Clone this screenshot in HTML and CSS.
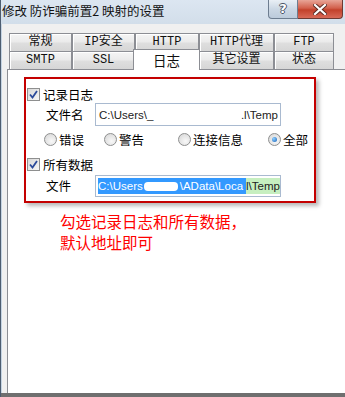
FILE: index.html
```html
<!DOCTYPE html>
<html lang="zh-CN">
<head>
    <meta charset="UTF-8">
    <title>修改 防诈骗前置2 映射的设置</title>
    <link rel="stylesheet" href="styles.css">
</head>
<body>
<div class="window">
    <div class="titlebar">
        <span class="title">修改 防诈骗前置2 映射的设置</span>
        <div class="caption-btns">
            <div class="btn-help">?</div>
            <div class="btn-close">
                <svg width="14" height="11" viewBox="0 0 14 11">
                    <path d="M2 1 L12 10 M12 1 L2 10" stroke="#5a2a22" stroke-width="4" stroke-linecap="square"/>
                    <path d="M2 1 L12 10 M12 1 L2 10" stroke="#ffffff" stroke-width="2.2" stroke-linecap="square"/>
                </svg>
            </div>
        </div>
    </div>

    <div class="client">
        <div class="tabs">
            <div class="tab-row">
                <div class="tab">常规</div>
                <div class="tab">IP安全</div>
                <div class="tab">HTTP</div>
                <div class="tab">HTTP代理</div>
                <div class="tab">FTP</div>
            </div>
            <div class="tab-row">
                <div class="tab">SMTP</div>
                <div class="tab">SSL</div>
                <div class="tab active">日志</div>
                <div class="tab">其它设置</div>
                <div class="tab">状态</div>
            </div>
        </div>

        <div class="panel">
            <div class="redbox">
                <div class="row check-row first">
                    <span class="checkbox">
                        <svg width="11" height="11" viewBox="0 0 11 11"><path d="M2 5.5 L4.5 8.5 L9 2" fill="none" stroke="#2b4a9a" stroke-width="1.8"/></svg>
                    </span>
                    <span>记录日志</span>
                </div>
                <div class="row field-row">
                    <span class="field-label">文件名</span>
                    <div class="input">
                        <span>C:\Users\_</span>
                        <span>.l\Temp</span>
                    </div>
                </div>
                <div class="row radio-row">
                    <label class="radio-item w1"><span class="radio"></span>错误</label>
                    <label class="radio-item w2"><span class="radio"></span>警告</label>
                    <label class="radio-item w3"><span class="radio"></span>连接信息</label>
                    <label class="radio-item"><span class="radio checked"></span>全部</label>
                </div>
                <div class="row check-row second">
                    <span class="checkbox">
                        <svg width="11" height="11" viewBox="0 0 11 11"><path d="M2 5.5 L4.5 8.5 L9 2" fill="none" stroke="#2b4a9a" stroke-width="1.8"/></svg>
                    </span>
                    <span>所有数据</span>
                </div>
                <div class="row field-row last">
                    <span class="field-label">文件</span>
                    <div class="input selected">
                        <span class="sel">C:\Users<span class="blot"></span>\AData\Loca</span><span class="sel-green">l\Temp</span>
                    </div>
                </div>
            </div>
            <p class="note">勾选记录日志和所有数据，<br>默认地址即可</p>
        </div>
    </div>

    <div class="bottombar"></div>
</div>
</body>
</html>
```

FILE: styles.css
```css
html, body {
    margin: 0;
    padding: 0;
}
body {
    width: 345px;
    height: 397px;
    overflow: hidden;
    font-family: "Noto Sans CJK SC", "Liberation Sans", sans-serif;
    font-size: 12px;
    color: #000;
}
.window {
    width: 345px;
    height: 397px;
    display: flex;
    flex-direction: column;
    border-left: 1px solid #4d5d70;
    box-sizing: border-box;
    background: #c4d3e2;
}

/* title bar */
.titlebar {
    height: 24px;
    flex: none;
    display: flex;
    justify-content: space-between;
    background: linear-gradient(#dce6f1, #d2deea);
}
.title {
    padding: 3px 0 0 1px;
    line-height: 16px;
    font-size: 12.5px;
    color: #111;
}
.caption-btns {
    display: flex;
    margin-right: 2px;
    height: 19px;
}
.btn-help {
    width: 28px;
    height: 18px;
    border: 1px solid #6d7d90;
    border-top: none;
    border-radius: 0 0 0 4px;
    background: linear-gradient(#e9eff5, #cbd7e4 50%, #bccbdb);
    color: #fff;
    font-family: "DejaVu Sans", sans-serif;
    font-weight: bold;
    font-size: 13px;
    line-height: 18px;
    text-align: center;
    text-shadow: 1px 0 0 #4a5566, -1px 0 0 #4a5566, 0 1px 0 #4a5566, 0 -1px 0 #4a5566;
}
.btn-close {
    width: 44px;
    height: 18px;
    border: 1px solid #6e3a33;
    border-top: none;
    border-left: none;
    border-radius: 0 0 4px 0;
    background: linear-gradient(#e8a597, #d2604c 45%, #c2412b 55%, #d86a58);
    display: flex;
    align-items: center;
    justify-content: center;
}

/* client area */
.client {
    flex: 1;
    display: flex;
    flex-direction: column;
    background: #f0f0f0;
    margin-left: 1px;
    padding: 9px 8px 0 5px;
    min-height: 0;
}
.tabs {
    margin-left: 2px;
}
.tab-row {
    display: grid;
    grid-template-columns: 63px 63px 64px 75px 60px;
    height: 18px;
}
.tab {
    border: 1px solid #8c8e94;
    border-bottom: none;
    background: linear-gradient(#f5f5f5, #ebebeb 45%, #dedede 55%, #d6d6d6);
    font-family: "Liberation Mono", "Noto Sans CJK SC", monospace;
    font-size: 12px;
    line-height: 17px;
    text-align: center;
    box-shadow: inset 1px 1px 0 #fff;
    color: #111;
}
.tab.active {
    background: #fff;
    box-shadow: none;
    margin: -2px -1px -1px -2px;
    line-height: 20px;
    z-index: 2;
    font-family: "Noto Sans CJK SC", sans-serif;
    font-size: 13.5px;
}

/* tab page */
.panel {
    flex: 1;
    width: 328px;
    background: #fff;
    border: 1px solid #8c8e94;
    border-bottom: none;
    padding: 7px 0 0 16px;
}
.redbox {
    width: 288px;
    height: 122px;
    border: 2px solid #c40000;
    box-shadow: 3px 3px 4px rgba(0, 0, 0, 0.28);
    display: flex;
    flex-direction: column;
}
.row {
    display: flex;
    align-items: center;
}
.check-row {
    height: 13px;
    padding-left: 1px;
    gap: 3px;
    line-height: 13px;
    font-size: 12.5px;
}
.check-row.first {
    margin-top: 9px;
}
.check-row.second {
    margin-top: 12px;
}
.checkbox {
    width: 11px;
    height: 11px;
    border: 1px solid #8e8f8f;
    background: linear-gradient(135deg, #d8d8d8, #f6f6f6);
    display: flex;
}
.field-row {
    margin-left: 20px;
    margin-top: 2px;
    height: 23px;
    font-size: 12.5px;
}
.field-row.last {
    margin-top: 4px;
    height: 22px;
}
.field-label {
    width: 49px;
    line-height: 14px;
}
.input {
    width: 186px;
    height: 100%;
    box-sizing: border-box;
    border: 1px solid #a9bad0;
    padding: 0 2px 0 3px;
    display: flex;
    align-items: center;
    justify-content: space-between;
    font-family: "Liberation Sans", Arial, sans-serif;
    font-size: 11.5px;
    color: #222;
}
.input.selected {
    justify-content: flex-start;
    padding: 0 2px 0 2px;
}
.sel {
    background: #3399ff;
    color: #fff;
    height: 16px;
    line-height: 16px;
    display: flex;
    align-items: center;
    width: 148px;
    flex: none;
    white-space: nowrap;
    overflow: hidden;
}
.blot {
    display: inline-block;
    width: 34px;
    height: 9px;
    background: #fff;
    border-radius: 4px;
    margin: 0 2px 0 1px;
}
.sel-green {
    background: #c6efc0;
    height: 16px;
    line-height: 16px;
    flex: 1;
    white-space: nowrap;
}
.radio-row {
    margin-top: 7px;
    height: 13px;
    padding-left: 18px;
    line-height: 13px;
    font-size: 12.5px;
}
.radio-item {
    display: flex;
    align-items: center;
    gap: 2px;
}
.radio-item.w1 { width: 60px; }
.radio-item.w2 { width: 74px; }
.radio-item.w3 { width: 90px; }
.radio {
    width: 11px;
    height: 11px;
    border: 1px solid #8e8f8f;
    border-radius: 50%;
    background: radial-gradient(circle at 60% 65%, #f8f8f8, #d4d4d4);
    display: flex;
    align-items: center;
    justify-content: center;
}
.radio.checked::after {
    content: "";
    width: 5px;
    height: 5px;
    border-radius: 50%;
    background: radial-gradient(circle at 35% 35%, #8fd0ff, #1560b8);
}
.note {
    margin: 8px 0 0 36px;
    color: #ff0000;
    font-size: 15.5px;
    line-height: 21px;
}

.bottombar {
    height: 4px;
    flex: none;
    background: #6f6f6f;
}
```
